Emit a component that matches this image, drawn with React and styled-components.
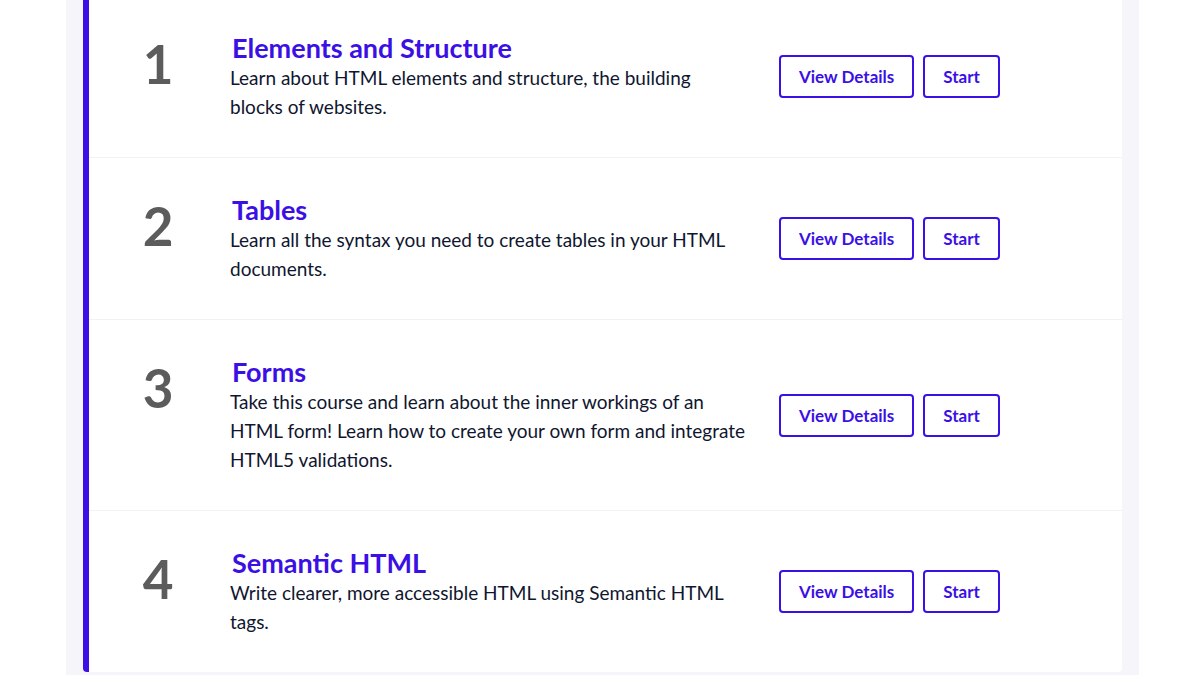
import React from "react";
import styled, { createGlobalStyle } from "styled-components";

const GlobalStyle = createGlobalStyle`
  html, body {
    margin: 0;
    padding: 0;
    background: #ffffff;
    font-family: "Lato", "Noto Sans", sans-serif;
    overflow: hidden;
  }
`;

const lessons = [
  {
    title: "Elements and Structure",
    text: "Learn about HTML elements and structure, the building blocks of websites.",
  },
  {
    title: "Tables",
    text: "Learn all the syntax you need to create tables in your HTML documents.",
  },
  {
    title: "Forms",
    text: "Take this course and learn about the inner workings of an HTML form! Learn how to create your own form and integrate HTML5 validations.",
  },
  {
    title: "Semantic HTML",
    text: "Write clearer, more accessible HTML using Semantic HTML tags.",
  },
];

const App = () => {
  return (
    <>
      <GlobalStyle />
      <Page>
        <Panel>
          <Card>
            {lessons.map((lesson, i) => (
              <Row key={lesson.title} first={i === 0}>
                <Number>{i + 1}</Number>
                <TextBlock>
                  <Title>{lesson.title}</Title>
                  <Description>{lesson.text}</Description>
                </TextBlock>
                <Actions>
                  <Button>View Details</Button>
                  <Button>Start</Button>
                </Actions>
              </Row>
            ))}
          </Card>
        </Panel>
      </Page>
    </>
  );
};
export default App;

const Page = styled.div`
  width: 1200px;
  height: 675px;
  overflow: hidden;
  background: #ffffff;
`;

const Panel = styled.div`
  display: flow-root;
  margin: 0 61px 0 66px;
  padding: 0 17px;
  background: #f5f5fa;
  height: 100%;
  box-sizing: border-box;
`;

const Card = styled.div`
  margin-top: -4px;
  background: #ffffff;
  border-left: 6px solid #3a10e5;
  border-radius: 0 0 4px 4px;
`;

const Row = styled.div`
  display: flex;
  align-items: center;
  padding: 36px 0;
  border-top: ${({ first }) => (first ? "none" : "1px solid #f1f1f6")};
`;

const Number = styled.div`
  width: 138px;
  flex-shrink: 0;
  align-self: flex-start;
  margin-top: 4px;
  text-align: center;
  font-size: 53px;
  font-weight: 700;
  line-height: 56px;
  color: #5c5c5c;
`;

const TextBlock = styled.div`
  width: 516px;
  flex-shrink: 0;
  padding-left: 3px;
  margin-right: 17px;
`;

const Title = styled.h3`
  margin: 0 0 0 2px;
  font-size: 27px;
  font-weight: 700;
  line-height: 31px;
  color: #3a10e5;
`;

const Description = styled.p`
  margin: 0;
  font-size: 19px;
  line-height: 29px;
  color: #10162f;
`;

const Actions = styled.div`
  display: flex;
  gap: 9px;
  margin-left: 16px;
`;

const Button = styled.button`
  height: 43px;
  padding: 0 18px;
  background: #ffffff;
  border: 2px solid #3a10e5;
  border-radius: 4px;
  font-family: inherit;
  font-size: 17px;
  font-weight: 700;
  color: #3a10e5;
  cursor: pointer;
`;
